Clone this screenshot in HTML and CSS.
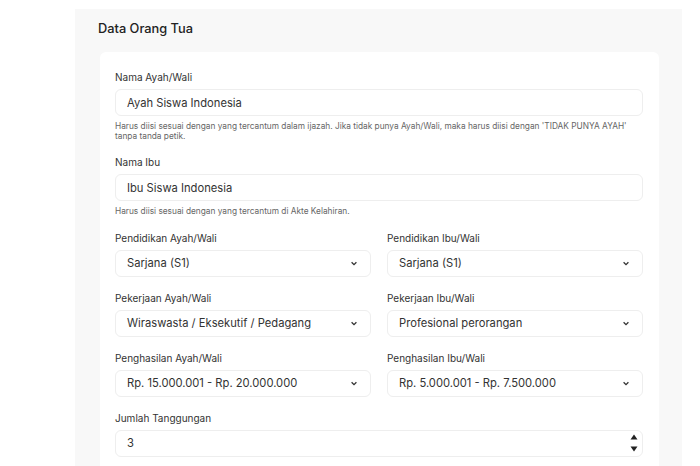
FILE: index.html
```html
<!DOCTYPE html>
<html lang="id">
<head>
<meta charset="utf-8">
<title>Data Orang Tua</title>
<link rel="stylesheet" href="styles.css">
</head>
<body>
<div class="page">
  <section class="panel">
    <h2 class="panel-title">Data Orang Tua</h2>
    <div class="card">
      <div class="field">
        <label class="label">Nama Ayah/Wali</label>
        <div class="control">Ayah Siswa Indonesia</div>
        <p class="help">Harus diisi sesuai dengan yang tercantum dalam ijazah. Jika tidak punya Ayah/Wali, maka harus diisi dengan 'TIDAK PUNYA AYAH' tanpa tanda petik.</p>
      </div>
      <div class="field">
        <label class="label">Nama Ibu</label>
        <div class="control">Ibu Siswa Indonesia</div>
        <p class="help">Harus diisi sesuai dengan yang tercantum di Akte Kelahiran.</p>
      </div>
      <div class="grid">
        <div class="field">
          <label class="label">Pendidikan Ayah/Wali</label>
          <div class="control select">Sarjana (S1)<svg class="chev" viewBox="0 0 10 6"><path d="M2 1.5 L5 4.5 L8 1.5"/></svg></div>
        </div>
        <div class="field">
          <label class="label">Pendidikan Ibu/Wali</label>
          <div class="control select">Sarjana (S1)<svg class="chev" viewBox="0 0 10 6"><path d="M2 1.5 L5 4.5 L8 1.5"/></svg></div>
        </div>
        <div class="field">
          <label class="label">Pekerjaan Ayah/Wali</label>
          <div class="control select">Wiraswasta / Eksekutif / Pedagang<svg class="chev" viewBox="0 0 10 6"><path d="M2 1.5 L5 4.5 L8 1.5"/></svg></div>
        </div>
        <div class="field">
          <label class="label">Pekerjaan Ibu/Wali</label>
          <div class="control select">Profesional perorangan<svg class="chev" viewBox="0 0 10 6"><path d="M2 1.5 L5 4.5 L8 1.5"/></svg></div>
        </div>
        <div class="field">
          <label class="label">Penghasilan Ayah/Wali</label>
          <div class="control select">Rp. 15.000.001 - Rp. 20.000.000<svg class="chev" viewBox="0 0 10 6"><path d="M2 1.5 L5 4.5 L8 1.5"/></svg></div>
        </div>
        <div class="field">
          <label class="label">Penghasilan Ibu/Wali</label>
          <div class="control select">Rp. 5.000.001 - Rp. 7.500.000<svg class="chev" viewBox="0 0 10 6"><path d="M2 1.5 L5 4.5 L8 1.5"/></svg></div>
        </div>
      </div>
      <div class="field">
        <label class="label">Jumlah Tanggungan</label>
        <div class="control number">3
          <span class="spin">
            <svg viewBox="0 0 8 6"><path d="M4 0.5 L7.5 5.5 L0.5 5.5 Z"/></svg>
            <svg viewBox="0 0 8 6"><path d="M0.5 0.5 L7.5 0.5 L4 5.5 Z"/></svg>
          </span>
        </div>
      </div>
    </div>
  </section>
</div>
</body>
</html>
```
FILE: styles.css
```css
* { box-sizing: border-box; }
html, body { margin: 0; padding: 0; background: #ffffff; overflow: hidden; }
body {
  font-family: Inter, "Noto Sans", "Liberation Sans", sans-serif;
  color: #2f2f2f;
}
.page {
  padding: 9px 18px 0 75px;
  height: 466px;
}
.panel {
  background: #f8f8f8;
  height: 100%;
  padding: 10px 23px 0 23px;
}
.panel-title {
  margin: 0 0 13px 0;
  font-size: 12.8px;
  line-height: 20px;
  font-weight: 500;
  color: #222;
}
.card {
  background: #ffffff;
  border-radius: 6px;
  margin-left: 2px;
  padding: 18px 16px 30px 15px;
  height: 420px;
}
.field { margin-bottom: 14px; }
.label {
  display: block;
  font-size: 10px;
  line-height: 14px;
  margin-bottom: 5px;
  color: #333;
}
.control {
  position: relative;
  height: 27px;
  border: 1px solid #eeeeee;
  border-radius: 6px;
  padding: 0 11px;
  display: flex;
  align-items: center;
  font-size: 11.2px;
  color: #333;
}
.help {
  margin: 6px 0 0 0;
  font-size: 8.3px;
  line-height: 9.5px;
  color: #666;
}
.grid {
  display: grid;
  grid-template-columns: 1fr 1fr;
  column-gap: 16px;
}
.chev {
  position: absolute;
  right: 12px;
  top: 10px;
  width: 8px;
  height: 5px;
  fill: none;
  stroke: #333;
  stroke-width: 1.6;
}
.spin {
  position: absolute;
  right: 4px;
  top: 3px;
  display: flex;
  flex-direction: column;
  gap: 6px;
}
.spin svg {
  width: 8px;
  height: 6px;
  fill: #222;
  display: block;
}
```
